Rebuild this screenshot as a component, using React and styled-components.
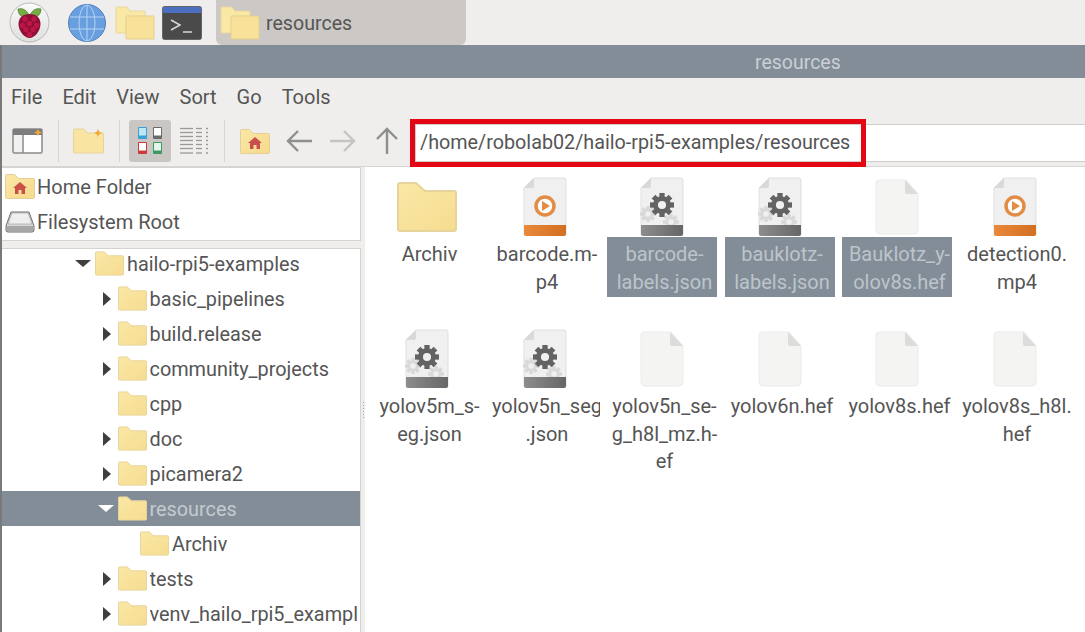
import React from "react";
import styled, { createGlobalStyle } from "styled-components";

const Global = createGlobalStyle`
  html, body { margin: 0; padding: 0; height: 100%; overflow: hidden; background: #fff; }
  #root { width: 1085px; height: 632px; overflow: hidden; }
  * { box-sizing: border-box; }
`;

const Screen = styled.div`
  width: 1085px; height: 632px; display: flex; flex-direction: column; overflow: hidden;
  font-family: Roboto, "Liberation Sans", sans-serif; font-size: 20px; color: #555;
  background: #efeeec;
`;
const Taskbar = styled.div`
  height: 45px; flex: none; display: flex; align-items: center; background: #efeeec; padding-left: 9px;
`;
const TaskIcon = styled.div`
  display: flex; width: ${p => p.$w}px; margin-right: ${p => p.$gap}px; flex: none;
`;
const TaskButton = styled.div`
  width: 250px; height: 45px; display: flex; align-items: center; gap: 6px; padding-left: 4px;
  background: #cbc8c5; border-radius: 0 0 6px 6px; margin-left: 14px; font-size: 19.6px;
`;
const TaskLabel = styled.span`
  padding-top: 2px;
`;
const Window = styled.div`
  flex: 1; min-height: 0; display: flex; flex-direction: column; border-left: 2px solid #77797b;
`;
const TitleBar = styled.div`
  height: 33px; flex: none; background: #838d98; color: #c9d0d6; padding: 1px 0 0 753px;
  display: flex; align-items: center; font-size: 19.5px;
`;
const MenuBar = styled.div`
  height: 37px; flex: none; display: flex; align-items: center; gap: 20px; padding-left: 9px;
`;
const MenuItem = styled.span``;
const Toolbar = styled.div`
  position: relative; height: 52px; flex: none; display: flex; align-items: flex-start;
  padding: 5px 0 0 10px; border-bottom: 1px solid #d8d6d3;
`;
const ToolIcon = styled.div`
  flex: none; height: 42px; display: flex; align-items: center; justify-content: center;
  width: ${p => p.$w}px; margin-right: ${p => p.$mr || 0}px; border-radius: 3px;
  background: ${p => (p.$active ? "#c9c6c3" : "transparent")};
`;
const Sep = styled.div`
  flex: none; width: 1px; height: 42px; background: #d7d5d2; margin-right: ${p => p.$mr}px;
`;
const Address = styled.div`
  position: absolute; left: 413px; right: 0; top: 9px; height: 38px; background: #fff;
  display: flex; align-items: center; padding: 0 0 2px 4px; border: 1px solid #cfcdca; border-right: 0;
  font-size: 19.75px; white-space: nowrap; color: #555;
`;
const Highlight = styled.div`
  position: absolute; left: 408px; top: 4px; width: 456px; height: 48px;
  border: 5px solid #e30613; pointer-events: none;
`;
const Body = styled.div`
  flex: 1; min-height: 0; display: flex;
`;
const Side = styled.div`
  width: 359px; flex: none; display: flex; flex-direction: column; gap: 7px;
`;
const Places = styled.div`
  height: 74px; flex: none; background: #fff; border: 1px solid #d5d3d0; border-left: 0; padding-top: 1px;
`;
const PlaceRow = styled.div`
  height: 35px; display: flex; align-items: center; gap: 2px; padding-left: 3px;
`;
const Tree = styled.div`
  flex: 1; min-height: 0; background: #fff; border: 1px solid #d5d3d0; border-left: 0; border-bottom: 0;
  overflow: hidden; font-size: 19.85px;
`;
const TreeList = styled.div`
  margin-top: -3px;
`;
const TreeRow = styled.div`
  height: 35px; display: flex; align-items: center; white-space: nowrap; overflow: hidden;
  padding: 0 2px 0 ${p => 71 + p.$level * 22.5}px;
  background: ${p => (p.$selected ? "#838d98" : "transparent")};
  color: ${p => (p.$selected ? "#c3cad0" : "inherit")};
  svg { flex: none; }
`;
const Arrow = styled.span`
  flex: none; width: 22px; display: flex; justify-content: flex-start;
  padding-left: ${p => (p.$open ? 2 : 7)}px;
  &::before {
    content: ""; display: ${p => (p.$none ? "none" : "block")};
    ${p => p.$open
      ? `border-left: 8px solid transparent; border-right: 8px solid transparent; border-top: 7px solid ${p.$light ? "#fff" : "#3f3f3f"};`
      : `border-top: 7px solid transparent; border-bottom: 7px solid transparent; border-left: 8px solid #3f3f3f;`}
  }
`;
const TreeLabel = styled.span`
  margin-left: 3px; padding-top: 2px; min-width: 0; overflow: hidden;
`;
const Handle = styled.div`
  width: 4px; flex: none; display: flex; flex-direction: column; align-items: center; justify-content: center;
  gap: 2px; padding-top: 20px;
  span { width: 1px; height: 1px; background: #a9a7a4; }
`;
const Files = styled.div`
  flex: 1; min-width: 0; background: #fff; padding: 10px 0 0 7px; overflow: hidden;
  display: grid; grid-template-columns: repeat(6, 110px); grid-auto-rows: 152px; column-gap: 7.5px;
`;
const FileItem = styled.div`
  width: 110px; display: flex; flex-direction: column; align-items: center;
`;
const IconSlot = styled.div`
  height: 60px; display: flex; align-items: center; justify-content: center; flex: none;
`;
const FileLabel = styled.div`
  width: 110px; padding: 4px 0 0 5px; min-height: 60px; text-align: center; line-height: 27.5px; white-space: nowrap;
  font-size: 20px; flex: none;
  background: ${p => (p.$selected ? "#838d98" : "transparent")};
  color: ${p => (p.$selected ? "#bcc4cb" : "inherit")};
`;
const Line = styled.div`
  margin: 0 -5px;
  ${p => p.$clip && "text-align: left; margin: 0 0 0 -2.5px; width: 107.5px; overflow: hidden;"}
`;

const Folder = ({ w = 29, h = 25, id = "f" }) => (
  <svg width={w} height={h} viewBox="0 0 60 50">
    <defs>
      <linearGradient id={id} x1="0" y1="0" x2="1" y2="1">
        <stop offset="0" stopColor="#fae8a6" />
        <stop offset="1" stopColor="#f6dc90" />
      </linearGradient>
    </defs>
    <path d="M3 1h16l9 8h29a2 2 0 0 1 2 2v36a2 2 0 0 1-2 2H3a2 2 0 0 1-2-2V3a2 2 0 0 1 2-2z" fill={`url(#${id})`} stroke="#e6d49c" strokeWidth="2" />
  </svg>
);

const HomeFolder = ({ w = 30, h = 25, id = "hf" }) => (
  <svg width={w} height={h} viewBox="0 0 30 25">
    <defs>
      <linearGradient id={id} x1="0" y1="0" x2="1" y2="1">
        <stop offset="0" stopColor="#fae8a6" />
        <stop offset="1" stopColor="#f6d98c" />
      </linearGradient>
    </defs>
    <path d="M1.500.5h8l4 4h15a1 1 0 0 1 1 1v18a1 1 0 0 1-1 1h-27a1 1 0 0 1-1-1V1.500a1 1 0 0 1 1-1z" fill={`url(#${id})`} stroke="#e3cf97" />
    <path d="M15 8l7 6h-2v6h-3.500v-4h-3v4H10v-6H8z" fill="#c9504a" />
  </svg>
);

const DoubleFolder = () => (
  <svg width="40" height="34" viewBox="0 0 40 34">
    <path d="M1 1h11l3 4h15v22H1z" fill="#fae8a6" stroke="#e8d69c" />
    <path d="M11 10h28v23H11z" fill="#f8e29a" stroke="#e3cf8f" />
  </svg>
);

const Raspberry = () => (
  <svg width="41" height="41" viewBox="0 0 41 41">
    <defs>
      <linearGradient id="rb" x1="0" y1="0" x2="0" y2="1">
        <stop offset="0" stopColor="#fbfbfb" />
        <stop offset="1" stopColor="#dedede" />
      </linearGradient>
    </defs>
    <circle cx="20.500" cy="20.500" r="19.500" fill="url(#rb)" stroke="#b9b9b9" />
    <path d="M20 13c-3-6-7-7-11-6 0 5 3 8 8 9zM21 13c3-6 7-7 11-6 0 5-3 8-8 9z" fill="#74ad42" stroke="#3f6b28" strokeWidth=".6" />
    <path d="M20.500 12c7 0 11 4 11 10 0 7-6 14-11 14s-11-7-11-14c0-6 4-10 11-10z" fill="#8f0f38" />
    {[[16,17],[25,17],[20.5,21.5],[13.5,23.5],[27.5,23.5],[17,27.5],[24,27.5],[20.5,32.5]].map(([x,y]) => (
      <circle key={x + "-" + y} cx={x} cy={y} r="2.700" fill="#bb1646" />
    ))}
  </svg>
);

const Globe = () => (
  <svg width="38" height="38" viewBox="0 0 38 38">
    <circle cx="19" cy="19" r="18.500" fill="#6a9fdf" stroke="#4f7fbb" />
    <g fill="none" stroke="#b3d3f4" strokeWidth="1">
      <ellipse cx="19" cy="19" rx="8" ry="18" />
      <path d="M19 1v36M2 13h34M2 25h34" />
    </g>
  </svg>
);

const Terminal = () => (
  <svg width="40" height="34" viewBox="0 0 40 34">
    <rect x=".5" y=".5" width="39" height="33" rx="2" fill="#4a4a4a" stroke="#666" />
    <rect x="1" y="1" width="38" height="6" fill="#4d6fc0" />
    <path d="M9 14l9 5-9 5M21 26h9" fill="none" stroke="#d8d8d8" strokeWidth="1.500" />
  </svg>
);

const PaneIcon = () => (
  <svg width="32" height="27" viewBox="0 0 32 27">
    <rect x="1" y="1" width="29" height="24" rx="1.500" fill="#fff" stroke="#8b8b8b" strokeWidth="1.500" />
    <rect x="1" y="1" width="29" height="6" fill="#7d7d7d" />
    <rect x="2" y="7" width="10" height="17" fill="#f1f1f0" />
    <path d="M11 7v18" stroke="#8b8b8b" strokeWidth="1.500" />
    <path d="M26 1l1.200 2.300L30 4.500l-2.800 1.200L26 8l-1.200-2.300L22 4.500l2.800-1.200z" fill="#f4a93a" />
  </svg>
);

const NewFolder = () => (
  <svg width="32" height="26" viewBox="0 0 32 26">
    <path d="M1.500 1h9l4 4h15a1 1 0 0 1 1 1v18a1 1 0 0 1-1 1h-28a1 1 0 0 1-1-1V2a1 1 0 0 1 1-1z" fill="#f9e5a1" stroke="#e6d49c" />
    <path d="M25 1l1.300 2.700L29 5l-2.700 1.300L25 9l-1.300-2.700L21 5l2.700-1.300z" fill="#f4a93a" />
  </svg>
);

const Mini = ({ x, y, c, inner = "#fff" }) => (
  <g>
    <rect x={x} y={y} width="9" height="12" rx="1" fill={c} />
    <rect x={x + 1} y={y + 1} width="7" height="7.500" fill={inner} />
  </g>
);

const IconView = () => (
  <svg width="24" height="28" viewBox="0 0 24 28">
    <Mini x={0} y={0} c="#3aa0d8" inner="#bfe6f7" />
    <Mini x={15} y={0} c="#6b6b6b" />
    <Mini x={0} y={15} c="#cc3a3a" />
    <Mini x={15} y={15} c="#3f9a62" inner="#e4f6ea" />
  </svg>
);

const ListView = () => (
  <svg width="30" height="28" viewBox="0 0 30 28">
    <g stroke="#9a9a9a" strokeWidth="1.300">
      {[1.500, 5.500, 9.500, 13.500, 17.500, 21.500, 26].map(y => (
        <g key={y}>
          <path d={`M1 ${y}h13`} />
          <path d={`M17 ${y}h6`} />
          <path d={`M27 ${y}h2`} />
        </g>
      ))}
    </g>
  </svg>
);

const ArrowIcon = ({ dir, color }) => {
  const d = { left: "M26 13H2M12 3L2 13l10 10", right: "M1 13h24M15 3l10 10-10 10", up: "M12 27V2M2 12L12 2l10 10" }[dir];
  const size = dir === "up" ? [24, 28] : [27, 26];
  return (
    <svg width={size[0]} height={size[1]} viewBox={`0 0 ${size[0]} ${size[1]}`}>
      <path d={d} fill="none" stroke={color} strokeWidth="2.400" />
    </svg>
  );
};

const Drive = () => (
  <svg width="30" height="25" viewBox="0 0 30 25">
    <path d="M6 3h18l5 14v4a2 2 0 0 1-2 2H3a2 2 0 0 1-2-2v-4z" fill="#d9d9d9" stroke="#6d6d6d" />
    <path d="M7 4h16l4 11H3z" fill="#efefef" stroke="#9a9a9a" strokeWidth=".6" />
    <rect x="2" y="17" width="26" height="5" fill="#a7a7a7" />
  </svg>
);

const Gear = ({ x, y, r, fill, hole }) => {
  const teeth = [0, 45, 90, 135, 180, 225, 270, 315];
  return (
    <g transform={`translate(${x} ${y})`}>
      {teeth.map(a => (
        <rect key={a} x={-r * 0.22} y={-r} width={r * 0.44} height={r * 0.5} fill={fill} transform={`rotate(${a})`} />
      ))}
      <circle r={r * 0.74} fill={fill} />
      <circle r={r * 0.34} fill={hole} />
    </g>
  );
};

const DocBase = ({ band, id, children }) => (
  <svg width="44" height="60" viewBox="0 0 44 60">
    <defs>
      <linearGradient id={id} x1="0" y1="0" x2="1" y2="0">
        <stop offset="0" stopColor={band[0]} />
        <stop offset="1" stopColor={band[1]} />
      </linearGradient>
    </defs>
    <path d="M11 1h30a2 2 0 0 1 2 2v55H1V11z" fill="#f0f0f0" stroke="#dfdfdf" />
    <path d="M11 1v8a2 2 0 0 1-2 2H1z" fill="#d9d9d9" />
    {children}
    <path d="M1 48h42v9a2 2 0 0 1-2 2H3a2 2 0 0 1-2-2z" fill={`url(#${id})`} />
  </svg>
);

const VideoDoc = ({ id }) => (
  <DocBase band={["#e9893b", "#d36f22"]} id={id}>
    <circle cx="22" cy="29" r="9" fill="#fff" stroke="#e28c45" strokeWidth="3.500" />
    <path d="M19 24l8 5-8 5z" fill="#e28c45" />
  </DocBase>
);

const GearDoc = ({ id }) => (
  <DocBase band={["#8d8d8d", "#666"]} id={id}>
    <Gear x="8" y="37" r="8" fill="#d9d9d9" hole="#f0f0f0" />
    <Gear x="31" y="45" r="8" fill="#d9d9d9" hole="#f0f0f0" />
    <Gear x="22" y="28" r="12" fill="#636363" hole="#f0f0f0" />
  </DocBase>
);

const BlankDoc = () => (
  <svg width="44" height="56" viewBox="0 0 44 56">
    <path d="M4 1h27l12 14v36a4 4 0 0 1-4 4H5a4 4 0 0 1-4-4V4a3 3 0 0 1 3-3z" fill="#f4f4f3" stroke="#ecebea" />
    <path d="M30 1l13 14H32a2 2 0 0 1-2-2z" fill="#dcdcda" />
  </svg>
);

const renderFileIcon = (kind, key) => {
  if (kind === "folder") return <Folder w={60} h={50} id={`ff${key}`} />;
  if (kind === "video") return <VideoDoc id={`fv${key}`} />;
  if (kind === "gear") return <GearDoc id={`fg${key}`} />;
  return <BlankDoc />;
};

const files = [
  { kind: "folder", lines: ["Archiv"] },
  { kind: "video", lines: ["barcode.m-", "p4"] },
  { kind: "gear", lines: ["barcode-", "labels.json"], selected: true },
  { kind: "gear", lines: ["bauklotz-", "labels.json"], selected: true },
  { kind: "blank", lines: ["Bauklotz_y-", "olov8s.hef"], selected: true },
  { kind: "video", lines: ["detection0.", "mp4"] },
  { kind: "gear", lines: ["yolov5m_s-", "eg.json"] },
  { kind: "gear", lines: ["yolov5n_seg", ".json"], clip: true },
  { kind: "blank", lines: ["yolov5n_se-", "g_h8l_mz.h-", "ef"] },
  { kind: "blank", lines: ["yolov6n.hef"] },
  { kind: "blank", lines: ["yolov8s.hef"] },
  { kind: "blank", lines: ["yolov8s_h8l.", "hef"] },
];

const tree = [
  { label: "hailo-rpi5-examples", level: 0, arrow: "open" },
  { label: "basic_pipelines", level: 1, arrow: "closed" },
  { label: "build.release", level: 1, arrow: "closed" },
  { label: "community_projects", level: 1, arrow: "closed" },
  { label: "cpp", level: 1, arrow: "none" },
  { label: "doc", level: 1, arrow: "closed" },
  { label: "picamera2", level: 1, arrow: "closed" },
  { label: "resources", level: 1, arrow: "open", selected: true },
  { label: "Archiv", level: 2, arrow: "none" },
  { label: "tests", level: 1, arrow: "closed" },
  { label: "venv_hailo_rpi5_examples", level: 1, arrow: "closed" },
];

export default function App() {
  return (
    <Screen>
      <Global />
      <Taskbar>
        <TaskIcon $w={41} $gap={18}><Raspberry /></TaskIcon>
        <TaskIcon $w={38} $gap={9}><Globe /></TaskIcon>
        <TaskIcon $w={40} $gap={7}><DoubleFolder /></TaskIcon>
        <TaskIcon $w={40} $gap={0}><Terminal /></TaskIcon>
        <TaskButton>
          <DoubleFolder />
          <TaskLabel>resources</TaskLabel>
        </TaskButton>
      </Taskbar>
      <Window>
        <TitleBar>resources</TitleBar>
        <MenuBar>
          {["File", "Edit", "View", "Sort", "Go", "Tools"].map(m => <MenuItem key={m}>{m}</MenuItem>)}
        </MenuBar>
        <Toolbar>
          <ToolIcon $w={32} $mr={14}><PaneIcon /></ToolIcon>
          <Sep $mr={14} />
          <ToolIcon $w={32} $mr={14}><NewFolder /></ToolIcon>
          <Sep $mr={9} />
          <ToolIcon $w={42} $mr={8} $active><IconView /></ToolIcon>
          <ToolIcon $w={30} $mr={15}><ListView /></ToolIcon>
          <Sep $mr={15} />
          <ToolIcon $w={30} $mr={16}><HomeFolder id="hf2" /></ToolIcon>
          <ToolIcon $w={27} $mr={16}><ArrowIcon dir="left" color="#8f8f8f" /></ToolIcon>
          <ToolIcon $w={27} $mr={19}><ArrowIcon dir="right" color="#c4c4c4" /></ToolIcon>
          <ToolIcon $w={24}><ArrowIcon dir="up" color="#8f8f8f" /></ToolIcon>
          <Address>/home/robolab02/hailo-rpi5-examples/resources</Address>
          <Highlight />
        </Toolbar>
        <Body>
          <Side>
            <Places>
              <PlaceRow><HomeFolder /><span>Home Folder</span></PlaceRow>
              <PlaceRow><Drive /><span>Filesystem Root</span></PlaceRow>
            </Places>
            <Tree>
              <TreeList>
                {tree.map((t, i) => (
                  <TreeRow key={t.label} $level={t.level} $selected={t.selected}>
                    <Arrow $open={t.arrow === "open"} $none={t.arrow === "none"} $light={t.selected} />
                    <Folder id={`t${i}`} />
                    <TreeLabel>{t.label}</TreeLabel>
                  </TreeRow>
                ))}
              </TreeList>
            </Tree>
          </Side>
          <Handle>
            {[0, 1, 2, 3, 4, 5].map(i => <span key={i} />)}
          </Handle>
          <Files>
            {files.map((f, i) => (
              <FileItem key={i}>
                <IconSlot>{renderFileIcon(f.kind, i)}</IconSlot>
                <FileLabel $selected={f.selected}>
                  {f.lines.map((l, n) => <Line key={l} $clip={f.clip && n === 0}>{l}</Line>)}
                </FileLabel>
              </FileItem>
            ))}
          </Files>
        </Body>
      </Window>
    </Screen>
  );
}
